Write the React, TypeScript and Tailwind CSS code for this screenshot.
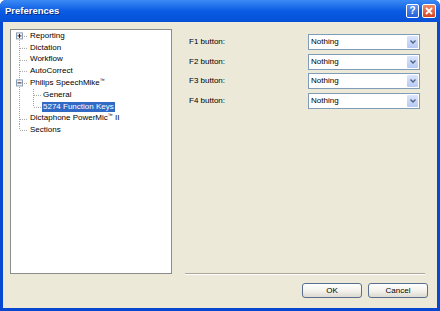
import React from "react";

const font = { fontFamily: '"Liberation Sans", Arial, sans-serif' };

type Row = { label: string; tm?: string; level: 0 | 1; kind: "first" | "mid" | "last" | "childMid" | "childLast"; box?: "+" | "-"; selected?: boolean };

const rows: Row[] = [
  { label: "Reporting", level: 0, kind: "first", box: "+" },
  { label: "Dictation", level: 0, kind: "mid" },
  { label: "Workflow", level: 0, kind: "mid" },
  { label: "AutoCorrect", level: 0, kind: "mid" },
  { label: "Philips SpeechMike", tm: "", level: 0, kind: "mid", box: "-" },
  { label: "General", level: 1, kind: "childMid" },
  { label: "5274 Function Keys", level: 1, kind: "childLast", selected: true },
  { label: "Dictaphone PowerMic", tm: " II", level: 0, kind: "mid" },
  { label: "Sections", level: 0, kind: "last" },
];

const H = 11.8;
const C = H / 2;

const TreeLines = ({ row }: { row: Row }) => {
  const w = row.level === 0 ? 18 : 31;
  const line = { stroke: "#a5a5a5", strokeWidth: 1, strokeDasharray: "1 1" };
  return (
    <svg width={w} height={H} className="shrink-0">
      {row.kind === "first" && <line x1={8.5} y1={C} x2={8.5} y2={H} {...line} />}
      {(row.kind === "mid" || row.kind === "childMid" || row.kind === "childLast") && (
        <line x1={8.5} y1={0} x2={8.5} y2={H} {...line} />
      )}
      {row.kind === "last" && <line x1={8.5} y1={0} x2={8.5} y2={C} {...line} />}
      {row.level === 0 && <line x1={9} y1={C + 0.5} x2={17} y2={C + 0.5} {...line} />}
      {row.kind === "childMid" && <line x1={22.5} y1={0} x2={22.5} y2={H} {...line} />}
      {row.kind === "childLast" && <line x1={22.5} y1={0} x2={22.5} y2={C} {...line} />}
      {row.level === 1 && <line x1={23} y1={C + 0.5} x2={30} y2={C + 0.5} {...line} />}
      {row.box && (
        <g>
          <rect x={5.5} y={C - 3} width={6} height={6} fill="#f4f4f0" stroke="#8c9cb4" />
          <line x1={6.5} y1={C} x2={10.5} y2={C} stroke="#223" strokeWidth={1} />
          {row.box === "+" && <line x1={8.5} y1={C - 2} x2={8.5} y2={C + 2} stroke="#223" strokeWidth={1} />}
        </g>
      )}
    </svg>
  );
};

const Combo = () => (
  <div className="flex h-[16px] w-[112px] items-center border border-[#7f9db9] bg-white">
    <span className="flex-1 pl-[2px] text-[8px] leading-none text-black">Nothing</span>
    <div className="mr-[1px] flex h-[12px] w-[11px] items-center justify-center rounded-[1px] bg-gradient-to-b from-[#dce6fb] to-[#b6c9f3]">
      <svg width="6" height="4" viewBox="0 0 6 4">
        <path d="M0.5 0.5 L3 3 L5.5 0.5" fill="none" stroke="#4d6185" strokeWidth="1.3" />
      </svg>
    </div>
  </div>
);

const XpButton = ({ label }: { label: string }) => (
  <button className="flex h-[15px] w-[60px] items-center justify-center rounded-[3px] border border-[#5a6f8f] bg-gradient-to-b from-white via-[#f4f3ee] to-[#dcdad0] text-[8px] leading-none text-black">
    {label}
  </button>
);

export default function App() {
  return (
    <div style={font} className="flex h-[311px] w-[440px] flex-col rounded-t-[6px] bg-[#0848d0]">
      <div className="flex h-[22px] items-center rounded-t-[6px] bg-gradient-to-b from-[#3a8af5] via-[#0a5be4] to-[#0650d6] pl-[5px] pr-[4px]">
        <span className="flex-1 text-[9.5px] font-bold text-white [text-shadow:1px_1px_0_#0a2a80]">Preferences</span>
        <div className="flex gap-[3px]">
          <div className="flex h-[14px] w-[13px] items-center justify-center rounded-[2px] border border-white bg-gradient-to-b from-[#5d93f5] to-[#2460d8] text-[10px] font-bold leading-none text-white">
            ?
          </div>
          <div className="flex h-[14px] w-[14px] items-center justify-center rounded-[2px] border border-white bg-gradient-to-b from-[#ee8a6a] to-[#d4441c]">
            <svg width="8" height="8" viewBox="0 0 8 8">
              <path d="M1 1 L7 7 M7 1 L1 7" stroke="white" strokeWidth="1.8" />
            </svg>
          </div>
        </div>
      </div>
      <div className="mx-[3px] mb-[3px] flex flex-1 items-start bg-[#ece9d8] pl-[7px] pt-[7px]">
        <div className="h-[245px] w-[162px] border border-[#8a8c8e] bg-white pt-0">
          {rows.map((row) => (
            <div key={row.label} className="flex items-center" style={{ height: H }}>
              <TreeLines row={row} />
              <span
                className={
                  row.selected
                    ? "bg-[#316ac5] px-[1px] text-[8px] leading-[10px] text-white"
                    : "px-[1px] text-[8px] leading-[10px] text-black"
                }
              >
                {row.label}
                {row.tm !== undefined && (
                  <>
                    <span className="align-top text-[5px] leading-none">™</span>
                    {row.tm}
                  </>
                )}
              </span>
            </div>
          ))}
        </div>
        <div className="ml-[13px] flex h-[269px] w-[243px] flex-col">
          <div className="mt-[5px] flex flex-col gap-[3.6px]">
            {["F1", "F2", "F3", "F4"].map((f) => (
              <div key={f} className="flex items-center">
                <span className="w-[123px] pl-[4px] text-[8px] text-black">{f} button:</span>
                <Combo />
              </div>
            ))}
          </div>
          <div className="flex-1" />
          <div className="w-[240px] border-t border-b border-t-[#aca899] border-b-white" />
          <div className="mt-[8px] flex justify-end gap-[6px]">
            <XpButton label="OK" />
            <XpButton label="Cancel" />
          </div>
        </div>
      </div>
    </div>
  );
}
